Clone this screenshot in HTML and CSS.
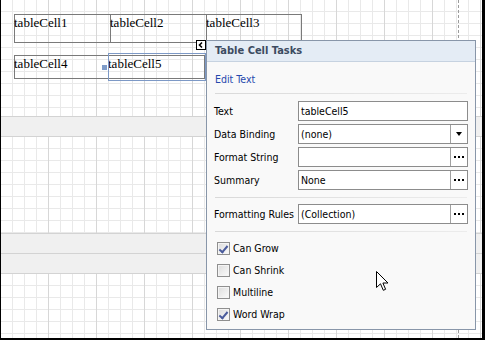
FILE: index.html
```html
<!DOCTYPE html>
<html lang="en">
<head>
    <meta charset="UTF-8">
    <title>Table Cell Tasks</title>
    <link rel="stylesheet" href="styles.css">
</head>
<body>

<div class="screen">
    <div class="section first">
        <div class="row">
            <div class="cell c1">tableCell1</div>
            <div class="cell c2">tableCell2</div>
            <div class="cell c3">tableCell3</div>
        </div>
        <div class="row row2">
            <div class="cell c1">tableCell4</div>
            <div class="cell c2 selected">tableCell5<span class="handle"></span></div>
            <div class="cell c3"></div>
        </div>
    </div>
    <div class="band"></div>
    <div class="section second"></div>
    <div class="band"></div>
    <div class="band"></div>
    <div class="section third"></div>

    <div class="margin-line"></div>

    <div class="smart-tag">
        <svg width="8" height="8" viewBox="0 0 8 8"><path d="M5 1.5 L2.5 4 L5 6.5" fill="none" stroke="#000" stroke-width="1.6"/></svg>
    </div>

    <div class="tasks">
        <div class="tasks-header">Table Cell Tasks</div>
        <div class="tasks-link">Edit Text</div>
        <div class="sep"></div>

        <div class="props">
            <div class="prop">
                <span class="label">Text</span>
                <div class="box"><span class="value">tableCell5</span></div>
            </div>
            <div class="prop">
                <span class="label">Data Binding</span>
                <div class="box"><span class="value">(none)</span><span class="btn"><i class="arrow"></i></span></div>
            </div>
            <div class="prop">
                <span class="label">Format String</span>
                <div class="box"><span class="value"></span><span class="btn"><i class="dots"></i></span></div>
            </div>
            <div class="prop">
                <span class="label">Summary</span>
                <div class="box"><span class="value">None</span><span class="btn"><i class="dots"></i></span></div>
            </div>
        </div>
        <div class="sep sep-mid"></div>
        <div class="props">
            <div class="prop">
                <span class="label">Formatting Rules</span>
                <div class="box"><span class="value">(Collection)</span><span class="btn"><i class="dots"></i></span></div>
            </div>
        </div>
        <div class="sep sep-low"></div>

        <div class="checks">
            <div class="check"><span class="cb checked"></span>Can Grow</div>
            <div class="check"><span class="cb"></span>Can Shrink</div>
            <div class="check"><span class="cb"></span>Multiline</div>
            <div class="check"><span class="cb checked"></span>Word Wrap</div>
        </div>
    </div>

    <svg class="cursor" width="14" height="21" viewBox="0 0 14 21">
        <path d="M0.5 0.5 L0.5 16.5 L4.5 12.8 L7.3 19.3 L9.6 18.3 L6.9 12 L12 12 Z" fill="#fff" stroke="#000" stroke-width="1" stroke-linejoin="miter"/>
    </svg>
</div>

</body>
</html>
```

FILE: styles.css
```css
* {
    margin: 0;
    padding: 0;
    box-sizing: border-box;
}

body {
    width: 485px;
    height: 340px;
    overflow: hidden;
    background-color: #fff;
    font-family: "DejaVu Sans Condensed", "Liberation Sans", sans-serif;
    font-size: 10.5px;
    color: #000;
}

.screen {
    position: relative;
    display: flex;
    flex-direction: column;
    width: 485px;
    height: 340px;
    border-left: 1px solid #000;
    border-right: 3px solid #000;
    border-bottom: 2px solid #000;
}

/* report surface */

.section {
    background-color: #fff;
    background-image:
        linear-gradient(to right, #d7d7d7 1px, transparent 1px),
        linear-gradient(to right, #e9e9e9 1px, transparent 1px),
        linear-gradient(to bottom, #e9e9e9 1px, transparent 1px);
    background-size: 48px 48px, 12px 12px, 12px 12px;
    background-position: -1px 11px, -1px 11px, -1px 11px;
}

.first {
    height: 116px;
    padding: 14px 0 0 13px;
}

.second {
    height: 96px;
}

.third {
    flex: 1;
}

.band {
    height: 21px;
    background-color: #f0f0f0;
    border-top: 1px solid #d3d3d3;
    border-bottom: 1px solid #d3d3d3;
}

.band + .band {
    height: 20px;
    border-top: 0;
}

.row {
    display: flex;
    width: 288px;
    height: 29px;
    border: 1px solid #7a7a7a;
}

.row2 {
    height: 24px;
    margin-top: 12px;
}

.cell {
    position: relative;
    font-family: "Liberation Serif", serif;
    font-size: 13px;
    line-height: 15px;
    text-indent: -1px;
}

.c1 {
    width: 96px;
    border-right: 1px solid #7a7a7a;
}

.c2 {
    width: 96px;
    border-right: 1px solid #7a7a7a;
}

.row2 .c1 {
    width: 94px;
}

.c3 {
    flex: 1;
}

.selected::after {
    content: "";
    position: absolute;
    left: -1px;
    top: -3px;
    bottom: -3px;
    right: -2px;
    border: 1px solid #7d99c6;
}

.handle {
    position: absolute;
    left: -7px;
    top: 9px;
    width: 5px;
    height: 5px;
    background-color: #7f9cc9;
}

.margin-line {
    position: absolute;
    left: 457px;
    top: 0;
    bottom: 0;
    border-left: 1px dashed #9c9c9c;
}

.smart-tag {
    position: absolute;
    left: 195px;
    top: 40px;
    width: 10px;
    height: 10px;
    border: 1px solid #000;
    background-color: #fff;
    display: flex;
    align-items: center;
    justify-content: center;
}

/* tasks panel */

.tasks {
    position: absolute;
    left: 205px;
    top: 40px;
    width: 270px;
    height: 290px;
    border: 1px solid #8896a9;
    background-color: #f9f9f9;
}

.tasks-header {
    height: 21px;
    padding-left: 8px;
    line-height: 20px;
    font-weight: bold;
    font-size: 11px;
    color: #3c4b61;
    background-color: #e4ecf5;
    border-bottom: 1px solid #c6d2e0;
}

.tasks-link {
    margin-top: 10px;
    padding-left: 8px;
    line-height: 14px;
    color: #2648ad;
}

.sep {
    height: 1px;
    margin: 7px 8px 7px 8px;
    background: linear-gradient(to right, #d9d9d9, #ececec);
}

.sep-mid {
    margin-bottom: 6px;
}

.sep-low {
    margin-bottom: 0;
}

.props {
    display: flex;
    flex-direction: column;
    gap: 3px;
    padding-left: 7px;
}

.prop {
    display: grid;
    grid-template-columns: 84px 170px;
    align-items: center;
    height: 20px;
}

.box {
    display: flex;
    height: 20px;
    border: 1px solid #8c8c8c;
    background-color: #fff;
}

.value {
    flex: 1;
    padding-left: 2px;
    line-height: 18px;
}

.btn {
    width: 17px;
    border-left: 1px solid #a0a0a0;
    display: flex;
    align-items: center;
    justify-content: center;
}

.arrow {
    width: 0;
    height: 0;
    border-left: 3.5px solid transparent;
    border-right: 3.5px solid transparent;
    border-top: 4px solid #000;
}

.dots {
    width: 10px;
    height: 2px;
    background: linear-gradient(to right, #000 2px, transparent 2px, transparent 4px, #000 4px, #000 6px, transparent 6px, transparent 8px, #000 8px);
}

.checks {
    padding: 5px 0 0 10px;
}

.check {
    display: flex;
    align-items: center;
    gap: 3px;
    height: 22px;
}

.cb {
    position: relative;
    width: 13px;
    height: 13px;
    border: 1px solid #8f8f8f;
    background: linear-gradient(135deg, #dcdcdc, #fbfbfb);
    box-shadow: inset 0 0 0 1px #f4f4f4;
}

.cb.checked::after {
    content: "";
    position: absolute;
    left: 3px;
    top: 1px;
    width: 3px;
    height: 7px;
    border-right: 2px solid #4a5b9c;
    border-bottom: 2px solid #4a5b9c;
    transform: rotate(40deg);
}

.cursor {
    position: absolute;
    left: 375px;
    top: 271px;
}
```
